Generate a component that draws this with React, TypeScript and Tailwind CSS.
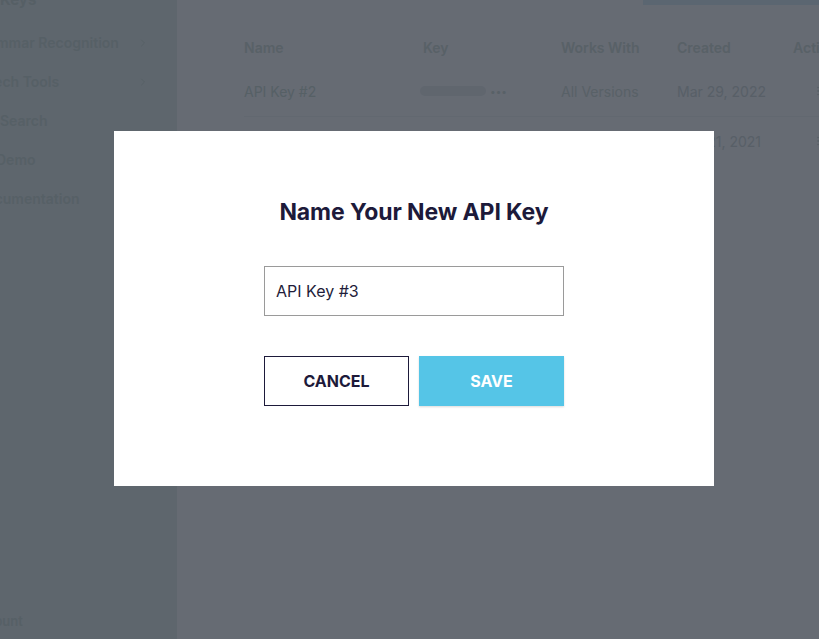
import React, { useState } from "react";
import { LuChevronRight, LuEllipsisVertical } from "react-icons/lu";

const font = { fontFamily: "Inter, 'Noto Sans', sans-serif" };

const sideItems = [
  { label: "Grammar Recognition", chevron: true, shift: "-ml-[28px]" },
  { label: "Speech Tools", chevron: true, shift: "-ml-[32px]" },
  { label: "Search", chevron: false, shift: "ml-0" },
  { label: "Demo", chevron: false, shift: "-ml-[4px]" },
  { label: "Documentation", chevron: false, shift: "-ml-[24px]" },
];

const Sidebar = () => (
  <aside className="w-[177px] shrink-0 h-full bg-[#ebf2f0] flex flex-col overflow-hidden">
    <p className="-mt-[9px] text-[15px] font-bold text-[#d6e2dd] leading-[18px]">Keys</p>
    <ul className="mt-[24px] flex flex-col gap-[20px]">
      {sideItems.map((item) => (
        <li key={item.label} className="flex items-center h-[19px] pr-[28px]">
          <span
            className={`${item.shift} flex-1 text-[14px] font-semibold whitespace-nowrap text-[#d8e3de]`}>
            {item.label}
          </span>
          {item.chevron && <LuChevronRight size={12} className="text-[#d8e3de]" />}
        </li>
      ))}
    </ul>
    <p className="mt-auto mb-[8px] -ml-[30px] text-[13px] font-semibold text-[#d8e3de]">Account</p>
  </aside>
);

const KeysTable = () => (
  <main className="flex-1 h-full bg-white relative overflow-hidden">
    <div className="flex justify-end">
      <div className="w-[176px] h-[5px] bg-[#e4f3fa]" />
    </div>
    <div className="pl-[67px] pt-[33px] text-[14px] whitespace-nowrap text-[#dde5e1]">
      <div className="flex font-semibold h-[18px] items-center">
        <span className="w-[179px] shrink-0">Name</span>
        <span className="w-[138px] shrink-0">Key</span>
        <span className="w-[116px] shrink-0">Works With</span>
        <span className="w-[116px] shrink-0">Created</span>
        <span className="shrink-0">Actions</span>
      </div>
      <div className="flex items-center h-[18px] mt-[26px]">
        <span className="w-[176px] shrink-0 text-[#d6e3dd]">API Key #2</span>
        <span className="w-[141px] shrink-0 flex items-center gap-1">
          <span className="w-[66px] h-[10px] rounded-full bg-[#f0f2f3]" />
          <span className="text-[10px]">•••</span>
        </span>
        <span className="w-[116px] shrink-0">All Versions</span>
        <span className="w-[126px] shrink-0 text-[#dbe2e2]">Mar 29, 2022</span>
        <LuEllipsisVertical size={12} className="ml-[9px] shrink-0" />
      </div>
      <div className="border-t border-[#f5f7f8] mt-[16px]" />
      <div className="flex items-center h-[18px] mt-[15px]">
        <span className="w-[176px] shrink-0">API Key #1</span>
        <span className="w-[141px] shrink-0 flex items-center gap-1">
          <span className="w-[66px] h-[10px] rounded-full bg-[#f0f2f3]" />
          <span className="text-[10px]">•••</span>
        </span>
        <span className="w-[116px] shrink-0">All Versions</span>
        <span className="w-[126px] shrink-0 text-[#dbe2e2]">Dec 21, 2021</span>
        <LuEllipsisVertical size={12} className="ml-[9px] shrink-0" />
      </div>
    </div>
  </main>
);

const NameKeyModal = () => {
  const [name, setName] = useState("API Key #3");
  return (
    <div className="fixed inset-0 bg-[#000816]/60">
      <div className="ml-[114px] mt-[131px] w-[600px] h-[355px] bg-white flex flex-col items-center pt-[67px]">
        <h2 className="text-[23px] leading-[28px] font-bold text-[#1d1a3a] tracking-[-0.1px]">
          Name Your New API Key
        </h2>
        <input
          value={name}
          onChange={(e) => setName(e.target.value)}
          className="mt-[40px] w-[300px] h-[50px] border border-[#9a9a9a] px-[11px] text-[16px] text-[#1f1d3a] outline-none"
          style={font}
        />
        <div className="mt-[40px] flex gap-[10px]">
          <button className="w-[145px] h-[50px] border border-[#1d1a3a] text-[16px] font-bold text-[#1d1a3a]">
            CANCEL
          </button>
          <button className="w-[145px] h-[50px] bg-[#55c5e7] text-[16px] font-bold text-white shadow-[0_1px_2px_rgba(0,0,0,0.15)]">
            SAVE
          </button>
        </div>
      </div>
    </div>
  );
};

export default function App() {
  return (
    <div className="w-[819px] h-[639px] flex overflow-hidden" style={font}>
      <Sidebar />
      <KeysTable />
      <NameKeyModal />
    </div>
  );
}
